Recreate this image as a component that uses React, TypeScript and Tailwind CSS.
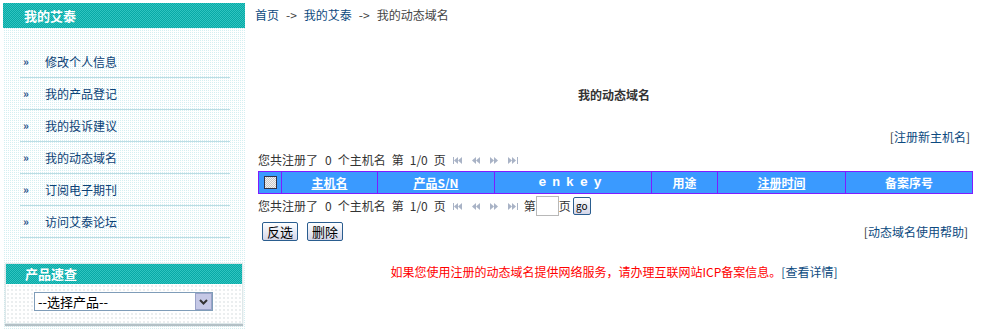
import { ReactNode } from "react";

const menu = ["修改个人信息", "我的产品登记", "我的投诉建议", "我的动态域名", "订阅电子期刊", "访问艾泰论坛"];

function NavIcon({ kind }: { kind: "first" | "prev" | "next" | "last" }) {
  const left = kind === "first" || kind === "prev";
  return (
    <svg width="11" height="9" viewBox="0 0 11 9" className="shrink-0">
      <g fill="#a9b3c6">
        {left ? (
          <>
            <polygon points="5,1 1,4.5 5,8" />
            <polygon points="9,1 5,4.5 9,8" />
            {kind === "first" && <rect x="0" y="1" width="1" height="7" />}
          </>
        ) : (
          <>
            <polygon points="1,1 5,4.5 1,8" />
            <polygon points="5,1 9,4.5 5,8" />
            {kind === "last" && <rect x="10" y="1" width="1" height="7" />}
          </>
        )}
      </g>
    </svg>
  );
}

function Pager({ children }: { children?: ReactNode }) {
  return (
    <div className="flex items-center h-[20px] text-[#333] leading-[14px]">
      <span>您共注册了</span>
      <span className="ml-[7px]">0</span>
      <span className="ml-[6px]">个主机名</span>
      <span className="ml-[6px]">第</span>
      <span className="ml-[6px]">1/0</span>
      <span className="ml-[6px]">页</span>
      <div className="flex items-center gap-[7px] ml-[7px]">
        <NavIcon kind="first" />
        <NavIcon kind="prev" />
        <NavIcon kind="next" />
        <NavIcon kind="last" />
      </div>
      {children}
    </div>
  );
}

function Btn({ label }: { label: string }) {
  return (
    <button className="h-[19px] px-[4px] text-[13px] leading-[15px] text-black border border-[#2a5d8f] rounded-[2px] bg-[linear-gradient(#ffffff,#d4d6e8)]">
      {label}
    </button>
  );
}

export default function App() {
  const cols: { w: string; label: ReactNode }[] = [
    { w: "w-[96px]", label: <span className="underline">主机名</span> },
    { w: "w-[117px]", label: <span className="underline">产品S/N</span> },
    { w: "w-[157px]", label: <span className="tracking-[6px] font-['Liberation_Mono',monospace] text-[13px]">enkey</span> },
    { w: "w-[66px]", label: <span>用途</span> },
    { w: "w-[128px]", label: <span className="underline">注册时间</span> },
    { w: "flex-1", label: <span>备案序号</span> },
  ];

  return (
    <div className="flex w-[988px] h-[329px] bg-white overflow-hidden text-[12px] font-['SimSun','Noto_Sans_CJK_SC',sans-serif]">
      <aside className="w-[242px] ml-[3px] mt-[3px] flex flex-col shrink-0">
        <div className="h-[25px] flex items-center pl-[21px] text-white font-bold text-[13px] bg-[conic-gradient(#08a9a6_25%,#30c4c0_0_50%,#08a9a6_0_75%,#30c4c0_0)] bg-[length:2px_2px]">
          我的艾泰
        </div>
        <div className="flex-1 flex flex-col bg-[conic-gradient(#d4eff1_25%,#ffffff_0)] bg-[length:2px_2px]">
          <ul className="pt-[18px] pl-[17px] pr-[15px]">
            {menu.map((m) => (
              <li key={m} className="h-[32px] flex items-center border-b border-[#bcdde4]">
                <span className="w-[25px] pl-[3px] text-[#1f4f86] font-bold text-[11px] leading-none">»</span>
                <span className="text-[#0c4277] leading-[14px]">{m}</span>
              </li>
            ))}
          </ul>
          <div className="mt-[25px] mx-[2px] shadow-[0_2px_1px_#b3c0c6] border border-[#dde8ea]">
            <div className="h-[20px] flex items-center pl-[19px] text-white font-bold text-[13px] bg-[conic-gradient(#08a9a6_25%,#30c4c0_0_50%,#08a9a6_0_75%,#30c4c0_0)] bg-[length:2px_2px]">
              产品速查
            </div>
            <div className="h-[39px] pt-[8px] pl-[28px] bg-white bg-[radial-gradient(#d3dadc_0.6px,transparent_0.8px)] bg-[length:4px_4px]">
              <div className="w-[179px] h-[19px] flex items-center bg-white border border-[#7f9db9]">
                <span className="flex-1 pl-[3px] text-[13px] leading-[15px] text-black">--选择产品--</span>
                <span className="w-[17px] h-[17px] flex items-center justify-center bg-[#c5c8e6] border border-[#9aa2c8]">
                  <svg width="9" height="6" viewBox="0 0 9 6">
                    <path d="M1 1 L4.5 4.5 L8 1" stroke="#333" strokeWidth="2" fill="none" />
                  </svg>
                </span>
              </div>
            </div>
          </div>
        </div>
      </aside>

      <main className="ml-[10px] w-[718px] flex flex-col leading-[14px]">
        <div className="pt-[8px] text-[#444]">
          <span className="text-[#0c4a80]">首页</span>
          <span className="mx-[7px]">-&gt;</span>
          <span className="text-[#0c4a80]">我的艾泰</span>
          <span className="mx-[7px]">-&gt;</span>
          <span>我的动态域名</span>
        </div>

        <div className="mt-[66px] text-center font-bold text-[#333]">我的动态域名</div>

        <div className="mt-[28px] text-right pr-[3px] text-[#333]">
          [<span className="text-[#0c4a80]">注册新主机名</span>]
        </div>

        <div className="mt-[6px] pl-[3px]">
          <Pager />
        </div>

        <div className="mt-[1px] ml-[3px] w-[715px] h-[23px] flex bg-[#3a9aff] border border-[#7f1cff] text-white font-bold">
          <div className="w-[23px] flex items-center justify-center border-r border-[#7f1cff]">
            <span className="w-[13px] h-[13px] border border-[#334] bg-[conic-gradient(#c8c8c8_25%,#f2f2f2_0_50%,#c8c8c8_0_75%,#f2f2f2_0)] bg-[length:2px_2px]" />
          </div>
          {cols.map((c, i) => (
            <div
              key={i}
              className={`${c.w} flex items-center justify-center ${i < cols.length - 1 ? "border-r border-[#7f1cff]" : ""}`}
            >
              {c.label}
            </div>
          ))}
        </div>

        <div className="mt-[2px] pl-[3px]">
          <Pager>
            <span className="ml-[6px] text-[#333]">第</span>
            <span className="w-[23px] h-[20px] border border-[#b8b8b8] bg-white" />
            <span className="text-[#333]">页</span>
            <span className="ml-[2px] w-[18px] h-[18px] flex items-center justify-center text-[10px] leading-none text-black border border-[#2a5d8f] rounded-[2px] bg-[linear-gradient(#ffffff,#d4d6e8)]">
              go
            </span>
          </Pager>
        </div>

        <div className="mt-[6px] flex items-center justify-between pl-[7px] pr-[5px]">
          <div className="flex gap-[9px]">
            <Btn label="反选" />
            <Btn label="删除" />
          </div>
          <div className="text-[#333]">
            [<span className="text-[#0c4a80]">动态域名使用帮助</span>]
          </div>
        </div>

        <div className="mt-[24px] text-center">
          <span className="text-[#ff0000]">如果您使用注册的动态域名提供网络服务，请办理互联网站ICP备案信息。</span>
          <span className="text-[#0c4a80]">[查看详情]</span>
        </div>
      </main>
    </div>
  );
}
